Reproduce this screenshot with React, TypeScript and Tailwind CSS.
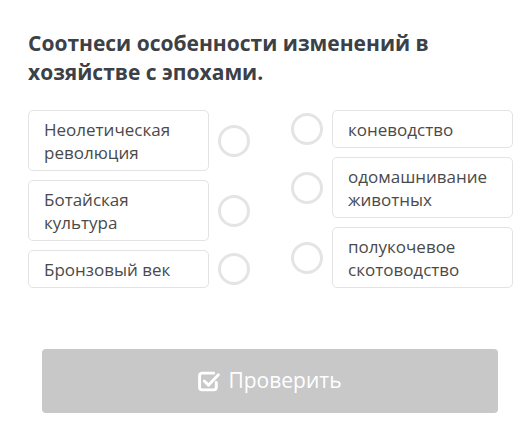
import React from "react";

const left = ["Неолетическая революция", "Ботайская культура", "Бронзовый век"];
const right = ["коневодство", "одомашнивание животных", "полукочевое скотоводство"];

function Dot() {
  return (
    <div className="w-[32px] h-[32px] shrink-0 rounded-full border-[3px] border-[#e4e4e4] bg-white" />
  );
}

function Card({ text }: { text: string }) {
  return (
    <div className="w-[181px] border border-[#e3e3e3] rounded-[5px] px-[15px] py-[6.5px] text-[17px] leading-[23px] text-[#4a4a4a]">
      {text}
    </div>
  );
}

function CheckSquare() {
  return (
    <svg width="23" height="21" viewBox="0 0 22 20" fill="none" stroke="currentColor" strokeWidth="2.8" strokeLinecap="round" strokeLinejoin="round">
      <path d="M15 2H4a2.5 2.5 0 0 0-2.5 2.5v11A2.5 2.5 0 0 0 4 18h11a2.5 2.5 0 0 0 2.5-2.5V11" />
      <path d="M6 9.5l4 4 9.5-10" />
    </svg>
  );
}

export default function App() {
  return (
    <div
      className="w-[532px] h-[427px] bg-white"
      style={{ fontFamily: '"Open Sans", sans-serif' }}
    >
      <div className="pt-[29px] px-[28px]">
        <h1 className="text-[21px] leading-[29px] font-bold text-[#3c4047]">
          Соотнеси особенности изменений в хозяйстве с эпохами.
        </h1>
      </div>

      <div className="flex px-[28px] mt-[23px] gap-[41px]">
        <div className="flex flex-col gap-[9px]">
          {left.map((t) => (
            <div key={t} className="flex items-center gap-[9px]">
              <Card text={t} />
              <Dot />
            </div>
          ))}
        </div>
        <div className="flex flex-col gap-[9px]">
          {right.map((t) => (
            <div key={t} className="flex items-center gap-[9px]">
              <Dot />
              <Card text={t} />
            </div>
          ))}
        </div>
      </div>

      <div className="px-[42px] mt-[61px]">
        <button className="w-[456px] h-[64px] rounded-[4px] bg-[#c8c8c8] text-white flex items-center justify-center gap-[7px] text-[21px]">
          <CheckSquare />
          <span>Проверить</span>
        </button>
      </div>
    </div>
  );
}
